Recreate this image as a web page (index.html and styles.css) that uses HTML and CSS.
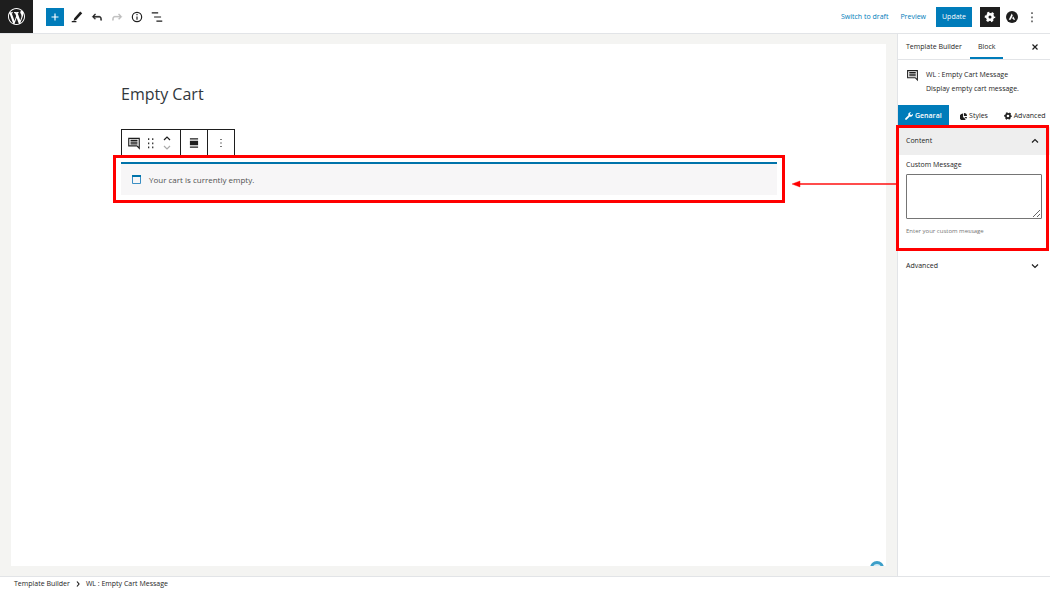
FILE: index.html
```html
<!DOCTYPE html>
<html lang="en">
<head>
    <meta charset="UTF-8">
    <meta name="viewport" content="width=device-width, initial-scale=1.0">
    <title>Empty Cart - Template Builder</title>
    <link rel="stylesheet" href="styles.css">
</head>
<body>
    <header class="topbar">
        <a href="#" class="site-logo" aria-label="WordPress">
            <svg width="17" height="17" viewBox="0 0 20 20" fill="currentColor"><path d="M20 10c0-5.51-4.49-10-10-10C4.48 0 0 4.49 0 10c0 5.52 4.48 10 10 10 5.51 0 10-4.48 10-10zM7.78 15.37L4.37 6.22c.55-.02 1.17-.08 1.17-.08.5-.06.44-1.13-.06-1.11 0 0-1.45.11-2.37.11-.18 0-.37 0-.58-.01C4.12 2.69 6.87 1.11 10 1.11c2.33 0 4.45.87 6.05 2.34-.68-.11-1.65.39-1.65 1.58 0 .74.45 1.36.9 2.1.35.61.55 1.36.55 2.46 0 1.49-1.4 5-1.4 5l-3.03-8.37c.54-.02.82-.17.82-.17.5-.05.44-1.25-.06-1.22 0 0-1.44.12-2.38.12-.87 0-2.33-.12-2.33-.12-.5-.03-.56 1.2-.06 1.22l.92.08 1.26 3.41zM17.41 10c.24-.64.74-1.87.43-4.25.7 1.29 1.05 2.71 1.05 4.25 0 3.29-1.73 6.24-4.4 7.78.97-2.59 1.94-5.2 2.92-7.78zM6.1 18.09C3.12 16.65 1.11 13.53 1.11 10c0-1.3.23-2.48.72-3.59C3.25 10.3 4.67 14.2 6.1 18.09zm4.03-6.63l2.58 6.98c-.86.29-1.76.45-2.71.45-.79 0-1.57-.11-2.29-.33.81-2.38 1.62-4.74 2.42-7.1z"/></svg>
        </a>
        <div class="tools">
            <button class="btn-add" aria-label="Add block">
                <svg width="14" height="14" viewBox="0 0 24 24" fill="currentColor"><path d="M18 11h-5V6h-2v5H6v2h5v5h2v-5h5z"/></svg>
            </button>
            <button class="btn-icon" aria-label="Edit">
                <svg width="14" height="14" viewBox="0 0 24 24" fill="currentColor"><path d="M17.500 2.500l3.500 3.200-10.500 11.300-4.500 1.500 1.300-4.300zM3 19h8v2H3z"/></svg>
            </button>
            <button class="btn-icon" aria-label="Undo">
                <svg width="14" height="14" viewBox="0 0 24 24" fill="currentColor"><path d="M18.300 11.700c-.6-.6-1.400-.9-2.300-.9H6.700l2.900-3.300-1.100-1-4.500 5L8.500 16l1-1-2.700-2.700H16c.5 0 .9.200 1.300.5 1 1 1 3.400 1 4.500v.3h1.500v-.2c0-1.500 0-4.300-1.500-5.700z" stroke="currentColor"/></svg>
            </button>
            <button class="btn-icon" aria-label="Redo" disabled>
                <svg width="14" height="14" viewBox="0 0 24 24" fill="currentColor"><path d="M15.600 6.500l-1.100 1 2.900 3.300H8c-.9 0-1.700.3-2.300.9-1.400 1.500-1.400 4.200-1.400 5.600v.2h1.500v-.3c0-1.100 0-3.500 1-4.500.3-.3.700-.5 1.300-.5h9.200L14.500 15l1.100 1.100 4.600-4.600z" stroke="currentColor"/></svg>
            </button>
            <button class="btn-icon" aria-label="Details">
                <svg width="14" height="14" viewBox="0 0 24 24" fill="none" stroke="currentColor" stroke-width="2"><circle cx="12" cy="12" r="8"/><path d="M12 11v5.500M12 7v2.200"/></svg>
            </button>
            <button class="btn-icon" aria-label="List view">
                <svg width="14" height="14" viewBox="0 0 24 24" fill="none" stroke="currentColor" stroke-width="2"><path d="M3 5h11M7 12h12M11 19h10"/></svg>
            </button>
        </div>
        <div class="actions">
            <a href="#">Switch to draft</a>
            <a href="#">Preview</a>
            <button class="btn-update">Update</button>
            <button class="btn-settings" aria-label="Settings">
                <svg width="12" height="12" viewBox="0 0 24 24" fill="none" stroke="currentColor"><circle cx="12" cy="12" r="5.500" stroke-width="5"/><circle cx="12" cy="12" r="8.500" stroke-width="4" stroke-dasharray="4.450" stroke-dashoffset="2.200"/></svg>
            </button>
            <button class="btn-icon" aria-label="Astra settings">
                <svg width="12" height="12" viewBox="0 0 24 24"><circle cx="12" cy="12" r="12" fill="#1e1e1e"/><path d="M5.500 17.500L11.500 5l2 4.200-4.200 8.300zM12 14.800l2.600-4 3.600 6.700h-3.300l-.8-2z" fill="#fff"/></svg>
            </button>
            <button class="btn-icon" aria-label="Options">
                <svg width="14" height="14" viewBox="0 0 24 24" fill="currentColor"><path d="M11 4h2v3h-2zM11 11h2v3h-2zM11 18h2v3h-2z"/></svg>
            </button>
        </div>
    </header>

    <div class="workspace">
        <main class="editor">
            <div class="canvas">
                <h1>Empty Cart</h1>
                <div class="block-toolbar">
                    <div class="toolbar-group block-mover">
                        <button aria-label="Empty Cart Message">
                            <svg width="14" height="14" viewBox="0 0 24 24"><path d="M3 4h18v17l-4-4H3z" fill="none" stroke="currentColor" stroke-width="2"/><path d="M6 7.500h12M6 10.500h12M6 13.500h12" stroke="currentColor" stroke-width="2"/></svg>
                        </button>
                        <button aria-label="Drag">
                            <svg width="14" height="14" viewBox="0 0 24 24" fill="currentColor"><path d="M7 4h2v3H7zM14 4h2v3h-2zM7 11h2v3H7zM14 11h2v3h-2zM7 18h2v3H7zM14 18h2v3h-2z"/></svg>
                        </button>
                        <button aria-label="Move up or down">
                            <svg width="12" height="16" viewBox="0 0 12 16" fill="none" stroke-width="1.200"><path d="M3 5l3-3 3 3" stroke="#1e1e1e"/><path d="M3 11l3 3 3-3" stroke="#aaa"/></svg>
                        </button>
                    </div>
                    <div class="toolbar-group">
                        <button aria-label="Align">
                            <svg width="14" height="14" viewBox="0 0 24 24" fill="currentColor"><path d="M5 4h14v2H5zM5 8h14v8H5zM5 18h14v2H5z"/></svg>
                        </button>
                    </div>
                    <div class="toolbar-group">
                        <button aria-label="More">
                            <svg width="14" height="14" viewBox="0 0 24 24" fill="currentColor"><path d="M11 5h2v2h-2zM11 11h2v2h-2zM11 17h2v2h-2z"/></svg>
                        </button>
                    </div>
                </div>
                <div class="notice highlight">
                    <svg width="9" height="9" viewBox="0 0 9 9"><path d="M.5 1h8v7.500h-8z" fill="none" stroke="#3b8fc4"/><path d="M0 0h9v2H0z" fill="#0073aa"/></svg>
                    <p>Your cart is currently empty.</p>
                </div>
                <svg class="help-badge" width="14" height="14" viewBox="0 0 14 14"><circle cx="7" cy="7" r="7" fill="#3d9fc8"/><circle cx="7" cy="7" r="4" fill="#d5edf6"/></svg>
            </div>
        </main>

        <aside class="sidebar">
            <div class="sidebar-tabs">
                <button>Template Builder</button>
                <button class="active">Block</button>
                <button class="btn-close" aria-label="Close">
                    <svg width="6" height="6" viewBox="0 0 6 6" stroke="currentColor" stroke-width="1.200"><path d="M.5.5l5 5M5.500.5l-5 5"/></svg>
                </button>
            </div>
            <div class="block-card">
                <svg width="13" height="13" viewBox="0 0 24 24"><path d="M3 3h18v17l-4-4H3z" fill="none" stroke="currentColor" stroke-width="2"/><path d="M6 6.500h12M6 9.500h12M6 12.500h12" stroke="currentColor" stroke-width="2"/></svg>
                <div>
                    <h2>WL : Empty Cart Message</h2>
                    <p>Display empty cart message.</p>
                </div>
            </div>
            <div class="panel-tabs">
                <button class="active">
                    <svg width="8" height="8" viewBox="0 0 16 16" fill="currentColor"><path d="M15.700 3.700l-2.500 2.400-2.600-.6-.6-2.600L12.400.4C10 0 7.600 1 6.800 3.400c-.3 1-.3 2 .1 2.900L.8 12.400c-1 1-.8 2.100-.2 2.800.8.800 2 .9 2.900 0l6-6.100c2 .8 4.200.2 5.500-1.500.8-1.100 1.100-2.600.7-3.900z"/></svg>
                    Genaral
                </button>
                <button>
                    <svg width="7" height="7" viewBox="0 0 16 16" fill="currentColor"><path d="M7 1v8l6 5A8 8 0 1 1 7 1z"/><path d="M9 0a7 7 0 0 1 7 7H9zM10 9h6a7 7 0 0 1-2 4z"/></svg>
                    Styles
                </button>
                <button>
                    <svg width="8" height="8" viewBox="0 0 24 24" fill="none" stroke="currentColor"><circle cx="12" cy="12" r="6.500" stroke-width="5"/><circle cx="12" cy="12" r="9.500" stroke-width="4" stroke-dasharray="4.970" stroke-dashoffset="2.500"/></svg>
                    Advanced
                </button>
            </div>
            <section class="panel highlight">
                <button class="panel-title open">
                    Content
                    <svg width="8" height="6" viewBox="0 0 8 6" fill="none" stroke="currentColor" stroke-width="1.200"><path d="M1 4.500l3-3 3 3"/></svg>
                </button>
                <div class="panel-body">
                    <label for="custom-message">Custom Message</label>
                    <textarea id="custom-message"></textarea>
                    <p class="hint">Enter your custom message</p>
                </div>
                <svg class="arrow" width="106" height="8" viewBox="0 0 106 8" fill="#f00"><path d="M0 4l8-3v6zM6 3.500h100v1H6z" stroke="#f00" stroke-width=".4"/></svg>
            </section>
            <button class="panel-title">
                Advanced
                <svg width="8" height="6" viewBox="0 0 8 6" fill="none" stroke="currentColor" stroke-width="1.200"><path d="M1 1.500l3 3 3-3"/></svg>
            </button>
        </aside>
    </div>

    <footer class="breadcrumb">
        <a href="#">Template Builder</a>
        <svg width="4" height="6" viewBox="0 0 4 6" fill="none" stroke="currentColor" stroke-width="1.200"><path d="M1 .5L3 3 1 5.500"/></svg>
        <span>WL : Empty Cart Message</span>
    </footer>
</body>
</html>
```
FILE: styles.css
```css
* {
    box-sizing: border-box;
}

body {
    display: flex;
    flex-direction: column;
    height: 100vh;
    margin: 0;
    overflow: hidden;
    background: #fff;
    color: #1e1e1e;
    font-family: "Open Sans", "Noto Sans", sans-serif;
    font-size: 7px;
    line-height: 10px;
}

h1, h2, p {
    margin: 0;
}

svg {
    display: block;
    flex-shrink: 0;
}

a {
    color: #007cba;
    text-decoration: none;
}

button {
    display: flex;
    align-items: center;
    justify-content: center;
    padding: 0;
    border: none;
    background: none;
    color: inherit;
    font: inherit;
    cursor: pointer;
}

/* Top bar */
.topbar {
    display: flex;
    align-items: center;
    height: 34px;
    border-bottom: 1px solid #e2e4e7;
}

.site-logo {
    display: flex;
    align-items: center;
    justify-content: center;
    width: 33px;
    height: 33px;
    background: #1e1e1e;
    color: #fff;
}

.tools {
    display: flex;
    align-items: center;
    gap: 6px;
    margin-left: 13px;
}

.btn-add {
    width: 18px;
    height: 18px;
    background: #007cba;
    color: #fff;
}

.btn-icon {
    width: 14px;
    height: 18px;
}

.btn-icon:disabled {
    color: #bbb;
}

.actions {
    display: flex;
    align-items: center;
    gap: 8px;
    margin-left: auto;
    padding-right: 11px;
}

.actions a {
    margin-right: 4px;
}

.actions a + a {
    margin-right: 2px;
}

.btn-update {
    height: 20px;
    padding: 0 6px;
    background: #007cba;
    color: #fff;
    font-weight: 500;
}

.btn-settings {
    width: 20px;
    height: 20px;
    margin-right: -1px;
    background: #1e1e1e;
    color: #fff;
}

.actions .btn-icon {
    margin-left: -2px;
}

/* Editor */
.workspace {
    display: flex;
    flex: 1;
    min-height: 0;
}

.editor {
    display: flex;
    flex: 1;
    padding: 10px 11px;
    background: #f4f4f2;
}

.canvas {
    position: relative;
    flex: 1;
    padding: 40px 109px 0 110px;
    overflow: hidden;
    background: #fff;
}

.canvas h1 {
    margin-bottom: 25px;
    color: #32373c;
    font-size: 16px;
    font-weight: 400;
    line-height: 20px;
}

.block-toolbar {
    display: inline-flex;
    height: 27px;
    margin-bottom: 6px;
    border: 1px solid #1e1e1e;
    vertical-align: top;
}

.toolbar-group {
    display: flex;
    align-items: center;
    gap: 3px;
    padding: 0 6px;
}

.block-mover {
    padding: 0 7px 0 5px;
}

.toolbar-group + .toolbar-group {
    border-left: 1px solid #1e1e1e;
}

.notice {
    display: flex;
    align-items: center;
    gap: 8px;
    height: 33px;
    padding: 0 11px;
    border-top: 2px solid #0073aa;
    background: #f7f6f7;
    color: #515151;
    font-size: 8px;
}

.help-badge {
    position: absolute;
    right: 2px;
    bottom: -9px;
}

/* Red callout frames */
.highlight {
    position: relative;
}

.highlight::after {
    content: "";
    position: absolute;
    inset: -9px -8px -8px -8px;
    border: 3px solid #f00;
    pointer-events: none;
}

.panel.highlight::after {
    inset: -2px 1px -1px -2px;
}

.arrow {
    position: absolute;
    top: 53px;
    right: 100%;
}

/* Sidebar */
.sidebar {
    width: 153px;
    border-left: 1px solid #e2e4e7;
}

.sidebar-tabs {
    display: flex;
    height: 26px;
    border-bottom: 1px solid #e2e4e7;
}

.sidebar-tabs button {
    padding: 0 8px;
}

.sidebar-tabs .active {
    border-top: 2px solid transparent;
    border-bottom: 2px solid #007cba;
    font-weight: 500;
}

.sidebar-tabs .btn-close {
    margin-left: auto;
    padding-right: 12px;
}

.block-card {
    display: flex;
    gap: 7px;
    height: 45px;
    padding: 9px 8px;
}

.block-card h2 {
    margin-bottom: 3px;
    font-size: 7px;
    font-weight: 500;
    line-height: 12px;
}

.panel-tabs {
    display: flex;
    height: 22px;
}

.panel-tabs button {
    flex: 1;
    gap: 2px;
    font-weight: 500;
}

.panel-tabs .active {
    background: #007cba;
    color: #fff;
    font-weight: 600;
}

.panel {
    height: 123px;
}

.panel-title {
    justify-content: space-between;
    width: 100%;
    height: 32px;
    padding: 0 11px 0 8px;
    font-weight: 500;
}

.panel-title.open {
    height: 28px;
    background: #eee;
}

.panel-body {
    padding: 5px 8px;
}

.panel-body label {
    display: block;
    margin-bottom: 4px;
}

.panel-body textarea {
    display: block;
    width: 100%;
    height: 45px;
    border: 1px solid #757575;
    border-radius: 1px;
    font: inherit;
}

.hint {
    margin-top: 7px;
    color: #757575;
    font-size: 6px;
}

/* Footer */
.breadcrumb {
    display: flex;
    align-items: center;
    gap: 6px;
    height: 14px;
    padding-left: 14px;
    border-top: 1px solid #e2e4e7;
}

.breadcrumb a {
    color: inherit;
}
```
